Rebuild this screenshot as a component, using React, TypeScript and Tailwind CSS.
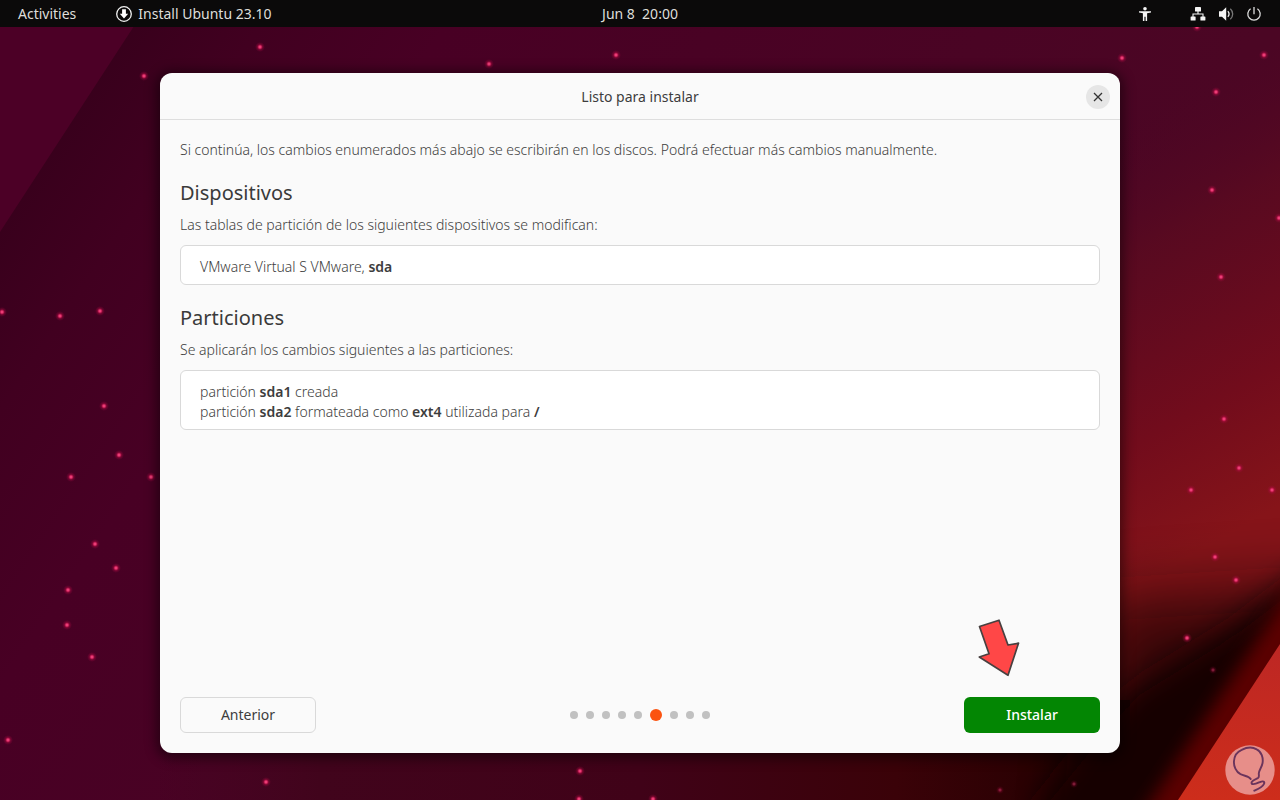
import React, { ReactNode } from "react";

const STARS: [number, number][] = [
  [260, 47], [144, 76], [489, 64], [616, 55], [1122, 58], [1264, 55], [1216, 92], [1197, 27],
  [1212, 190], [1279, 218], [1221, 277], [1224, 419], [1239, 468], [1191, 490], [1272, 490],
  [1215, 557], [1236, 580], [1187, 638], [2, 312], [60, 316], [100, 311], [104, 406],
  [119, 455], [71, 477], [151, 477], [95, 544], [116, 568], [68, 590], [67, 625], [92, 657],
  [8, 740], [266, 782], [580, 771], [579, 799], [653, 799],
];

const FAINT_STARS: [number, number][] = [[1213, 670], [1000, 790], [1074, 784]];

const Wallpaper: React.FC = () => (
  <svg
    className="absolute inset-0 h-full w-full"
    viewBox="0 0 1280 800"
    preserveAspectRatio="xMidYMid slice"
    aria-hidden="true"
  >
    <defs>
      <linearGradient id="sky" gradientUnits="userSpaceOnUse" x1="60" y1="80" x2="860" y2="620">
        <stop offset="0" stopColor="#36001b" />
        <stop offset="0.14" stopColor="#410020" />
        <stop offset="0.3" stopColor="#480024" />
        <stop offset="1" stopColor="#4b0624" />
      </linearGradient>
      <linearGradient id="glow" gradientUnits="userSpaceOnUse" x1="1090" y1="140" x2="1290" y2="500">
        <stop offset="0" stopColor="#4f0624" stopOpacity="0" />
        <stop offset="0.3" stopColor="#5a0a20" stopOpacity="0.9" />
        <stop offset="0.7" stopColor="#720c1c" />
        <stop offset="1" stopColor="#861419" />
      </linearGradient>
      <linearGradient id="floor" gradientUnits="userSpaceOnUse" x1="0" y1="0" x2="1280" y2="0">
        <stop offset="0.12" stopColor="#43051f" stopOpacity="0" />
        <stop offset="0.25" stopColor="#41041c" />
        <stop offset="0.5" stopColor="#400218" />
        <stop offset="0.7" stopColor="#3a0208" />
        <stop offset="0.86" stopColor="#230000" />
        <stop offset="0.93" stopColor="#150000" />
      </linearGradient>
      <linearGradient id="corner" x1="0" y1="0" x2="0" y2="1">
        <stop offset="0" stopColor="#bd2724" />
        <stop offset="1" stopColor="#cd2d1b" />
      </linearGradient>
      <radialGradient id="star">
        <stop offset="0" stopColor="#ff5b91" />
        <stop offset="0.28" stopColor="#e52a67" stopOpacity="0.9" />
        <stop offset="0.55" stopColor="#b60b45" stopOpacity="0.4" />
        <stop offset="1" stopColor="#a00540" stopOpacity="0" />
      </radialGradient>
      <filter id="soft-wide" x="-50%" y="-50%" width="200%" height="200%">
        <feGaussianBlur stdDeviation="32" />
      </filter>
      <filter id="soft" x="-50%" y="-50%" width="200%" height="200%">
        <feGaussianBlur stdDeviation="15" />
      </filter>
      <filter id="soft-narrow" x="-50%" y="-50%" width="200%" height="200%">
        <feGaussianBlur stdDeviation="9" />
      </filter>
    </defs>
    <rect width="1280" height="800" fill="url(#sky)" />
    <path d="M0 0H151L0 232Z" fill="#4c0026" />
    <path d="M900 0H1280V800H900Z" fill="url(#glow)" />
    <path d="M160 700H1130V800H160Z" fill="url(#floor)" />
    <path d="M1340 585L1100 600L1080 880H1340Z" fill="#160000" opacity="0.7" filter="url(#soft-wide)" />
    <path d="M1340 545L1230 628L1130 690L1040 800V880H1340Z" fill="#160000" filter="url(#soft)" />
    <path d="M1320 578L1150 838" stroke="#5c0506" strokeWidth="38" filter="url(#soft-narrow)" />
    <path d="M1280 644V800H1178Z" fill="url(#corner)" />
    {STARS.map(([x, y]) => (
      <circle key={`${x}-${y}`} cx={x} cy={y} r="5" fill="url(#star)" />
    ))}
    {FAINT_STARS.map(([x, y]) => (
      <circle key={`${x}-${y}`} cx={x} cy={y} r="4" fill="url(#star)" opacity="0.5" />
    ))}
  </svg>
);

const TopBar: React.FC = () => (
  <header className="relative grid h-[27px] grid-cols-3 items-center bg-[#0b0a0a] text-[14px] text-[#dededa]">
    <div className="flex items-center gap-10 pl-[18px]">
      <button type="button">Activities</button>
      <button type="button" className="flex items-center gap-[6px]">
        <svg className="h-4 w-4" viewBox="0 0 16 16" aria-hidden="true">
          <circle cx="8" cy="8" r="7.3" fill="none" stroke="#f2f2f2" strokeWidth="1.3" />
          <path d="M6.1 3.2h3.8v4.5h2.3L8 12.5 3.8 7.7h2.3z" fill="#fff" />
        </svg>
        Install Ubuntu 23.10
      </button>
    </div>
    <time className="text-center">Jun 8&nbsp; 20:00</time>
    <div className="flex items-center justify-end pr-[18px]">
      <button type="button" aria-label="Accessibility" className="mr-[37px]">
        <svg className="h-4 w-4" viewBox="0 0 16 16" fill="#f5f5f5" aria-hidden="true">
          <circle cx="8" cy="2.8" r="1.8" />
          <path d="M2 5.2h12v1.2l-3.9.9V15H8.6v-4.2H7.4V15H5.9V7.3L2 6.4z" />
        </svg>
      </button>
      <button type="button" aria-label="System menu" className="flex items-center gap-3">
        <svg className="h-4 w-4" viewBox="0 0 16 16" fill="#f5f5f5" aria-hidden="true">
          <rect x="5" y="1" width="6" height="4.6" rx="0.7" />
          <rect x="0.6" y="10.4" width="5" height="4.2" rx="0.7" />
          <rect x="10.4" y="10.4" width="5" height="4.2" rx="0.7" />
          <path d="M8 5v3M3 11V8h10v3" fill="none" stroke="#f5f5f5" strokeWidth="1.1" />
        </svg>
        <svg className="h-4 w-4" viewBox="0 0 16 16" aria-hidden="true">
          <path d="M1 5.2h3L8.2 1.2v13.6L4 10.8H1z" fill="#f5f5f5" />
          <path d="M9.8 5.2c1.7 1.4 1.7 4.2 0 5.6" fill="none" stroke="#f5f5f5" strokeWidth="1.3" />
          <path d="M12.3 2.8c3.2 3 3.2 7.4 0 10.4" fill="none" stroke="#777" strokeWidth="1.3" />
        </svg>
        <svg className="h-4 w-4" viewBox="0 0 16 16" fill="none" stroke="#dedede" strokeWidth="1.3" aria-hidden="true">
          <path d="M8 1v7.2M4.6 2.7a6.2 6.2 0 1 0 6.8 0" />
        </svg>
      </button>
    </div>
  </header>
);

interface ChangeSectionProps {
  title: string;
  description: string;
  children: ReactNode;
}

const ChangeSection: React.FC<ChangeSectionProps> = ({ title, description, children }) => (
  <section className="mt-5">
    <h2 className="text-[20px] leading-[25px] font-normal text-[#3a3a3a]">{title}</h2>
    <p className="mt-[10px] leading-5">{description}</p>
    <ul className="mt-[10px] rounded-md border border-[#d9d9d9] bg-white px-[19px] pt-[11px] pb-[7px] leading-5">
      {children}
    </ul>
  </section>
);

const STEPS = 9;
const CURRENT_STEP = 5;

const StepDots: React.FC = () => (
  <ol className="flex items-center gap-2" aria-label="Progreso">
    {Array.from({ length: STEPS }, (_, i) => (
      <li
        key={i}
        className={
          i === CURRENT_STEP
            ? "h-3 w-3 rounded-full bg-[#fb5310]"
            : "h-2 w-2 rounded-full bg-[#c1c1c1]"
        }
      />
    ))}
  </ol>
);

const Installer: React.FC = () => (
  <div className="flex flex-1 flex-col rounded-xl bg-[#fafafa] text-[14px] font-light text-[#3d3d3d] shadow-[0_2px_12px_4px_rgba(0,0,0,0.45)]">
    <div className="grid h-[47px] grid-cols-[1fr_auto_1fr] items-center border-b border-[#dedede] px-[10px] pt-px">
      <h1 className="col-start-2 text-[14px] font-normal">Listo para instalar</h1>
      <button
        type="button"
        aria-label="Cerrar"
        className="flex h-6 w-6 items-center justify-center justify-self-end rounded-full bg-[#e6e6e6]"
      >
        <svg className="h-[10px] w-[10px]" viewBox="0 0 10 10" aria-hidden="true">
          <path d="M1 1l8 8M9 1L1 9" stroke="#333" strokeWidth="1.3" />
        </svg>
      </button>
    </div>

    <div className="flex-1 px-5 pt-5">
      <p className="leading-5">
        Si continúa, los cambios enumerados más abajo se escribirán en los discos. Podrá efectuar más cambios manualmente.
      </p>
      <ChangeSection
        title="Dispositivos"
        description="Las tablas de partición de los siguientes dispositivos se modifican:"
      >
        <li>
          VMware Virtual S VMware, <b className="font-semibold">sda</b>
        </li>
      </ChangeSection>
      <ChangeSection
        title="Particiones"
        description="Se aplicarán los cambios siguientes a las particiones:"
      >
        <li>
          partición <b className="font-semibold">sda1</b> creada
        </li>
        <li>
          partición <b className="font-semibold">sda2</b> formateada como <b className="font-semibold">ext4</b> utilizada para <b className="font-semibold">/</b>
        </li>
      </ChangeSection>
    </div>

    <footer className="flex items-center justify-between p-5">
      <button
        type="button"
        className="h-9 w-[136px] rounded-md border border-[#d9d9d9] pb-px text-[14px] font-normal"
      >
        Anterior
      </button>
      <StepDots />
      <div className="relative">
        <button
          type="button"
          className="h-9 w-[136px] rounded-md bg-[#038603] pb-px text-[14px] font-medium text-white"
        >
          Instalar
        </button>
        <svg
          className="absolute bottom-full left-3 mb-5 h-[60px] w-[46px]"
          viewBox="0 0 46 60"
          aria-hidden="true"
        >
          <path
            d="M3.5 9.5L23 3.2 32 28 42.5 26.2 32 58.3 3.3 40 13 36.8z"
            fill="#ff4747"
            stroke="#484040"
            strokeWidth="1.7"
            strokeLinejoin="round"
          />
        </svg>
      </div>
    </footer>
  </div>
);

const Badge: React.FC = () => (
  <svg className="absolute right-[5px] bottom-[5px] h-[50px] w-[50px]" viewBox="0 0 50 50" aria-hidden="true">
    <circle cx="25" cy="25" r="24.7" fill="#e78e89" />
    <path
      d="M25.700 34C24 31 20 31.200 15.500 29.200C11 27 8.500 21 9 16C9.500 10 12.500 6.500 16.700 4.800C22 2.200 28 2.200 31.700 4.300C36.500 6.500 38.500 13 37.500 18.300C36.800 22.500 34 25 33.800 28.500C33.800 31 34.500 31.500 33 33C30 34.500 25.500 36.500 26.700 38.600C28 40.500 33 38 35.500 36.900C38 35.800 40 36.800 39 38.800C37.500 42 34 43.500 29.300 45.700"
      fill="none"
      stroke="#6b345c"
      strokeWidth="1.900"
      strokeLinecap="round"
      strokeLinejoin="round"
    />
  </svg>
);

const App: React.FC = () => {
  return (
    <div className="relative flex min-h-screen flex-col overflow-hidden bg-[#45001f] font-['Noto_Sans',sans-serif]">
      <Wallpaper />
      <TopBar />
      <main className="relative flex flex-1 flex-col px-40 pt-[46px] pb-[47px]">
        <Installer />
      </main>
      <Badge />
    </div>
  );
};

export default App;
